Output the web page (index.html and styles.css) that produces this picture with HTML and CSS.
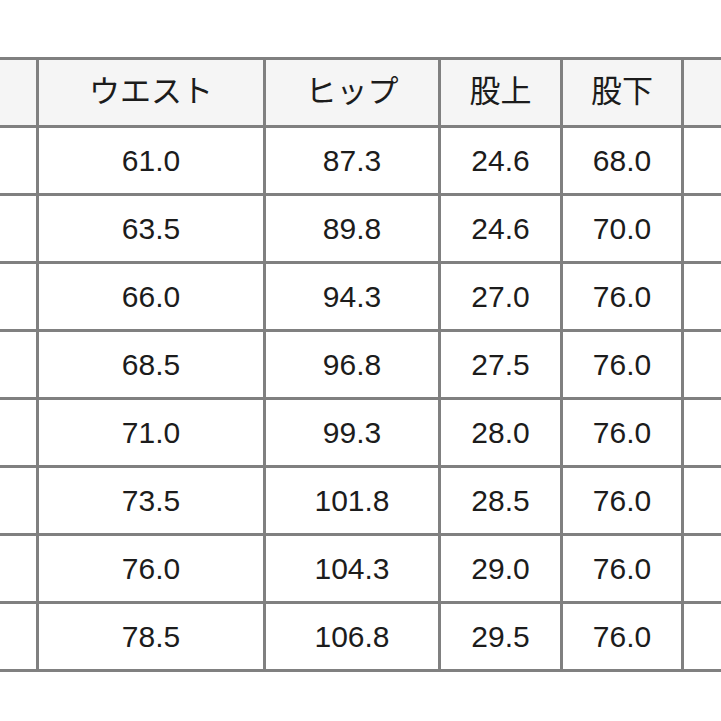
FILE: index.html
```
<!DOCTYPE html>
<html lang="ja">
<head>
<meta charset="utf-8">
<link rel="stylesheet" href="styles.css">
</head>
<body>
<div class="frame">
<table class="size-table">
<colgroup>
<col class="c-edge-l"><col class="c-waist"><col class="c-hip"><col class="c-rise"><col class="c-inseam"><col class="c-edge-r">
</colgroup>
<thead>
<tr><th></th><th>ウエスト</th><th>ヒップ</th><th>股上</th><th>股下</th><th></th></tr>
</thead>
<tbody>
<tr><td></td><td>61.0</td><td>87.3</td><td>24.6</td><td>68.0</td><td></td></tr>
<tr><td></td><td>63.5</td><td>89.8</td><td>24.6</td><td>70.0</td><td></td></tr>
<tr><td></td><td>66.0</td><td>94.3</td><td>27.0</td><td>76.0</td><td></td></tr>
<tr><td></td><td>68.5</td><td>96.8</td><td>27.5</td><td>76.0</td><td></td></tr>
<tr><td></td><td>71.0</td><td>99.3</td><td>28.0</td><td>76.0</td><td></td></tr>
<tr><td></td><td>73.5</td><td>101.8</td><td>28.5</td><td>76.0</td><td></td></tr>
<tr><td></td><td>76.0</td><td>104.3</td><td>29.0</td><td>76.0</td><td></td></tr>
<tr><td></td><td>78.5</td><td>106.8</td><td>29.5</td><td>76.0</td><td></td></tr>
</tbody>
</table>
</div>
</body>
</html>
```
FILE: styles.css
```
html, body {
  margin: 0;
  padding: 0;
  background: #ffffff;
}
.frame {
  width: 721px;
  height: 721px;
  overflow: hidden;
  padding-top: 57px;
  box-sizing: border-box;
}
.size-table {
  border-collapse: collapse;
  table-layout: fixed;
  width: 896px;
  margin-left: -64px;
  font-family: "Liberation Sans", Arial, "Noto Sans CJK JP", sans-serif;
  color: #1c1c1c;
}
.c-edge-l { width: 100px; }
.c-waist { width: 227px; }
.c-hip { width: 175px; }
.c-rise { width: 122px; }
.c-inseam { width: 121px; }
.c-edge-r { width: 151px; }
.size-table th,
.size-table td {
  border: 3px solid #808080;
  padding: 0;
  text-align: center;
  vertical-align: middle;
  height: 68px;
  box-sizing: border-box;
}
.size-table th {
  background: #f5f5f5;
  font-family: "Noto Sans CJK JP", sans-serif;
  font-weight: 400;
  font-size: 31px;
  padding-bottom: 8px;
}
.size-table td {
  font-size: 30px;
}
```
